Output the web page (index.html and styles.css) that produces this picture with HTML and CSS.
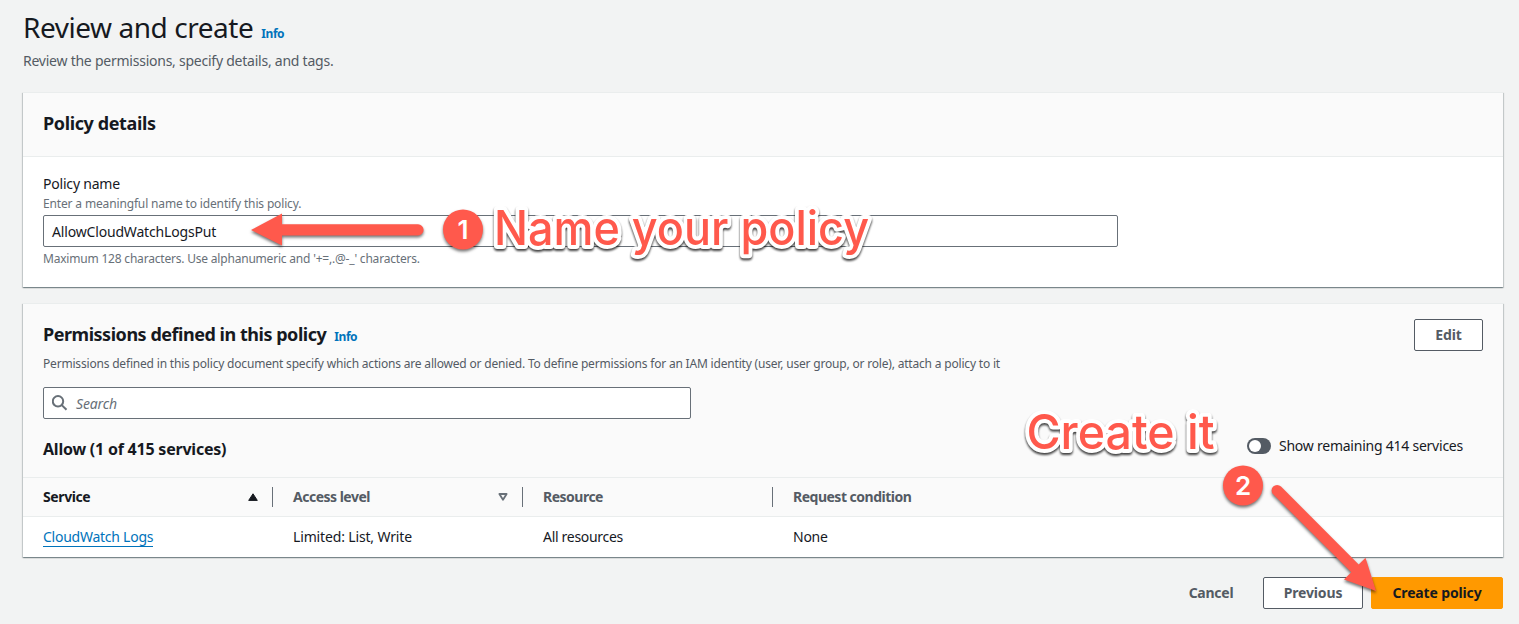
FILE: index.html
```html
<!DOCTYPE html>
<html lang="en">
<head>
<meta charset="utf-8">
<title>Review and create</title>
<link rel="stylesheet" href="styles.css">
</head>
<body>
<main class="page">
  <header class="page-header">
    <div class="title-row"><h1>Review and create</h1><a class="info info-page">Info</a></div>
    <p class="page-desc">Review the permissions, specify details, and tags.</p>
  </header>

  <section class="card details">
    <div class="details-header"><h2 class="t-details">Policy details</h2></div>
    <div class="details-body">
      <label class="field-label">Policy name</label>
      <p class="hint hint-top">Enter a meaningful name to identify this policy.</p>
      <div class="input"><span class="input-value">AllowCloudWatchLogsPut</span></div>
      <p class="hint hint-bottom">Maximum 128 characters. Use alphanumeric and '+=,.@-_' characters.</p>
    </div>
  </section>

  <section class="card permissions">
    <div class="perm-header">
      <div class="perm-top">
        <div>
          <div class="title-row perm-title"><h2 class="t-perm">Permissions defined in this policy</h2><a class="info">Info</a></div>
          <p class="perm-desc">Permissions defined in this policy document specify which actions are allowed or denied. To define permissions for an IAM identity (user, user group, or role), attach a policy to it</p>
        </div>
        <button class="btn btn-edit"><span>Edit</span></button>
      </div>
      <div class="search">
        <svg width="16" height="16" viewBox="0 0 16 16" fill="none" stroke="#687078" stroke-width="2"><circle cx="6" cy="6.3" r="5.2"/><path d="M9.8 10.1 14.5 14.8"/></svg>
        <span class="placeholder">Search</span>
      </div>
      <div class="allow-row">
        <h3>Allow (1 of 415 services)</h3>
        <div class="toggle-wrap"><span class="toggle"><span class="knob"></span></span><span class="toggle-label">Show remaining 414 services</span></div>
      </div>
    </div>
    <div class="row head">
      <div class="cell sorted"><span class="h-service">Service</span>
        <svg width="10" height="8" viewBox="0 0 10 8"><path d="M5 .8 9.3 7.4H.7Z" fill="#16191f" stroke="#16191f" stroke-linejoin="round"/></svg></div>
      <div class="cell"><span class="h-access">Access level</span>
        <svg width="10" height="8" viewBox="0 0 10 8"><path d="M1.4 1H8.6L5 6.8Z" fill="none" stroke="#687078" stroke-width="1.8" stroke-linejoin="round"/></svg></div>
      <div class="cell"><span class="h-resource">Resource</span></div>
      <div class="cell last"><span class="h-request">Request condition</span></div>
    </div>
    <div class="row body-row">
      <div class="cell"><a class="link">CloudWatch Logs</a></div>
      <div class="cell"><span class="c-limited">Limited: List, Write</span></div>
      <div class="cell"><span class="c-all">All resources</span></div>
      <div class="cell last"><span class="c-none">None</span></div>
    </div>
  </section>

  <footer class="actions">
    <button class="btn btn-link"><span class="b-cancel">Cancel</span></button>
    <button class="btn btn-prev"><span class="b-prev">Previous</span></button>
    <button class="btn btn-primary"><span class="b-create">Create policy</span></button>
  </footer>
</main>

<svg class="annotations" width="1519" height="624" viewBox="0 0 1519 624">
  <g class="mark">
    <path d="M251 230 282 213.5V224.3H418A5.6 5.6 0 0 1 418 235.5H282V245.5Z"/>
    <circle cx="463" cy="229.5" r="20"/>
    <circle cx="1243" cy="485.5" r="20"/>
    <path d="M1376 591 1344 579.5 1351.3 572.3 1273.2 494.3A5.5 5.5 0 0 1 1281 486.5L1358.7 564.5 1365.5 557.8Z"/>
  </g>
  <text class="num" x="463" y="239" text-anchor="middle">1</text>
  <text class="num" x="1243" y="495" text-anchor="middle">2</text>
  <text class="note" x="494" y="245" textLength="375" lengthAdjust="spacingAndGlyphs">Name your policy</text>
  <text class="note" x="1026.5" y="448.5" textLength="188" lengthAdjust="spacingAndGlyphs">Create it</text>
</svg>
</body>
</html>
```

FILE: styles.css
```css
* { box-sizing: border-box; }
body {
  margin: 0;
  height: 624px;
  overflow: hidden;
  position: relative;
  background: #f2f3f3;
  color: #16191f;
  font: 14px/22px "Noto Sans", "Open Sans", sans-serif;
}
h1, h2, h3, p { margin: 0; }
span, a, h1, h2, h3, p { white-space: nowrap; }
.page { padding: 9px 16px 0 23px; }
.page-header { height: 83px; }
.title-row { display: flex; align-items: baseline; }
h1 { font-size: 28px; line-height: 36px; font-weight: 400; letter-spacing: -0.45px; }
h2 { font-size: 18px; line-height: 22px; font-weight: 700; letter-spacing: -0.47px; }
.t-details { letter-spacing: -0.38px; }
.info { color: #0073bb; font-size: 12px; font-weight: 700; margin-left: 8px; letter-spacing: -0.45px; }
.page-desc { margin-top: 5px; color: #545b64; letter-spacing: -0.24px; }

.card {
  background: #fff;
  border-top: 1px solid #eaeded;
  box-shadow: 0 1px 1px 0 rgba(0,28,36,.3), 1px 1px 1px 0 rgba(0,28,36,.15), -1px 1px 1px 0 rgba(0,28,36,.15);
}
.details { height: 195px; margin-bottom: 16px; }
.details-header { height: 64px; padding: 19px 20px; background: #fafafa; border-bottom: 1px solid #eaeded; }
.details-body { padding: 17px 20px 0; }
.field-label { display: block; line-height: 20px; letter-spacing: -0.2px; }
.hint { font-size: 12px; line-height: 16px; color: #687078; letter-spacing: -0.2px; }
.hint-top { margin-top: 2px; letter-spacing: -0.15px; }
.hint-bottom { margin-top: 4px; }
.input, .search { height: 32px; border: 1px solid #687078; border-radius: 2px; background: #fff; display: flex; align-items: center; padding: 0 8px; }
.input { width: 1075px; margin-top: 3px; }
.input-value { letter-spacing: -0.17px; padding-top: 2px; }

.permissions { height: 254px; }
.perm-header { height: 173px; padding: 15px 20px 0; background: #fafafa; }
.perm-top { display: flex; justify-content: space-between; height: 68px; }
.perm-title { height: 31px; padding-top: 4px; }
.perm-desc { margin-top: 6px; font-size: 12px; line-height: 16px; color: #545b64; letter-spacing: -0.188px; }
.search { width: 648px; color: #687078; gap: 8px; }
.placeholder { font-style: italic; letter-spacing: -0.15px; padding-top: 1px; }
.allow-row { display: flex; justify-content: space-between; padding: 19px 20px 0 0; }
h3 { font-size: 16px; line-height: 22px; font-weight: 700; letter-spacing: -0.22px; }
.toggle-wrap { display: flex; align-items: center; gap: 8px; height: 16px; }
.toggle { width: 24px; height: 16px; border-radius: 8px; background: #545b64; padding: 2px; }
.knob { display: block; width: 12px; height: 12px; border-radius: 50%; background: #fff; }
.toggle-label { letter-spacing: -0.235px; }

.row { display: grid; grid-template-columns: 250px 250px 250px 1fr; }
.head { height: 40px; background: #fafafa; border-top: 1px solid #eaeded; border-bottom: 1px solid #eaeded; color: #545b64; font-weight: 700; }
.cell { display: flex; align-items: center; justify-content: space-between; padding: 0 15px 0 20px; }
.head .cell { align-self: center; height: 20px; border-right: 1px solid #687078; letter-spacing: -0.5px; padding-right: 14px; }
.head .last { border-right: 0; }
.head .sorted { color: #16191f; letter-spacing: -0.4px; }
.body-row { height: 40px; letter-spacing: -0.25px; }
.c-limited { letter-spacing: -0.15px; }
.c-all { letter-spacing: -0.3px; }
.link { color: #0073bb; line-height: 18px; border-bottom: 1px solid #0073bb; margin-top: 1px; }

.actions { display: flex; justify-content: flex-end; margin-top: 20px; }
.btn { height: 32px; padding: 0; border: 1px solid #545b64; border-radius: 2px; background: #fff; color: #545b64; font: 700 14px/20px "Noto Sans", "Open Sans", sans-serif; letter-spacing: -0.15px; }
.btn-edit { width: 69px; }
.btn-link { width: 88px; margin-right: 8px; border: 0; background: none; letter-spacing: -0.25px; }
.btn-prev { width: 100px; margin-right: 8px; }
.btn-primary { width: 132px; border-color: #f90; background: #f90; color: #16191f; }

.annotations { position: absolute; left: 0; top: 0; font-family: Inter, "Liberation Sans", sans-serif; }
.mark { fill: #ff594c; filter: drop-shadow(0 2px 1.5px rgba(0,0,0,.55)); }
.num { fill: #fff; font-size: 26px; font-weight: 600; }
.note { fill: #ff594c; stroke: #fff; stroke-width: 8px; stroke-linejoin: round; paint-order: stroke; font-size: 48px; font-weight: 500; filter: drop-shadow(0 2px 1px rgba(0,0,0,.75)); }
```
